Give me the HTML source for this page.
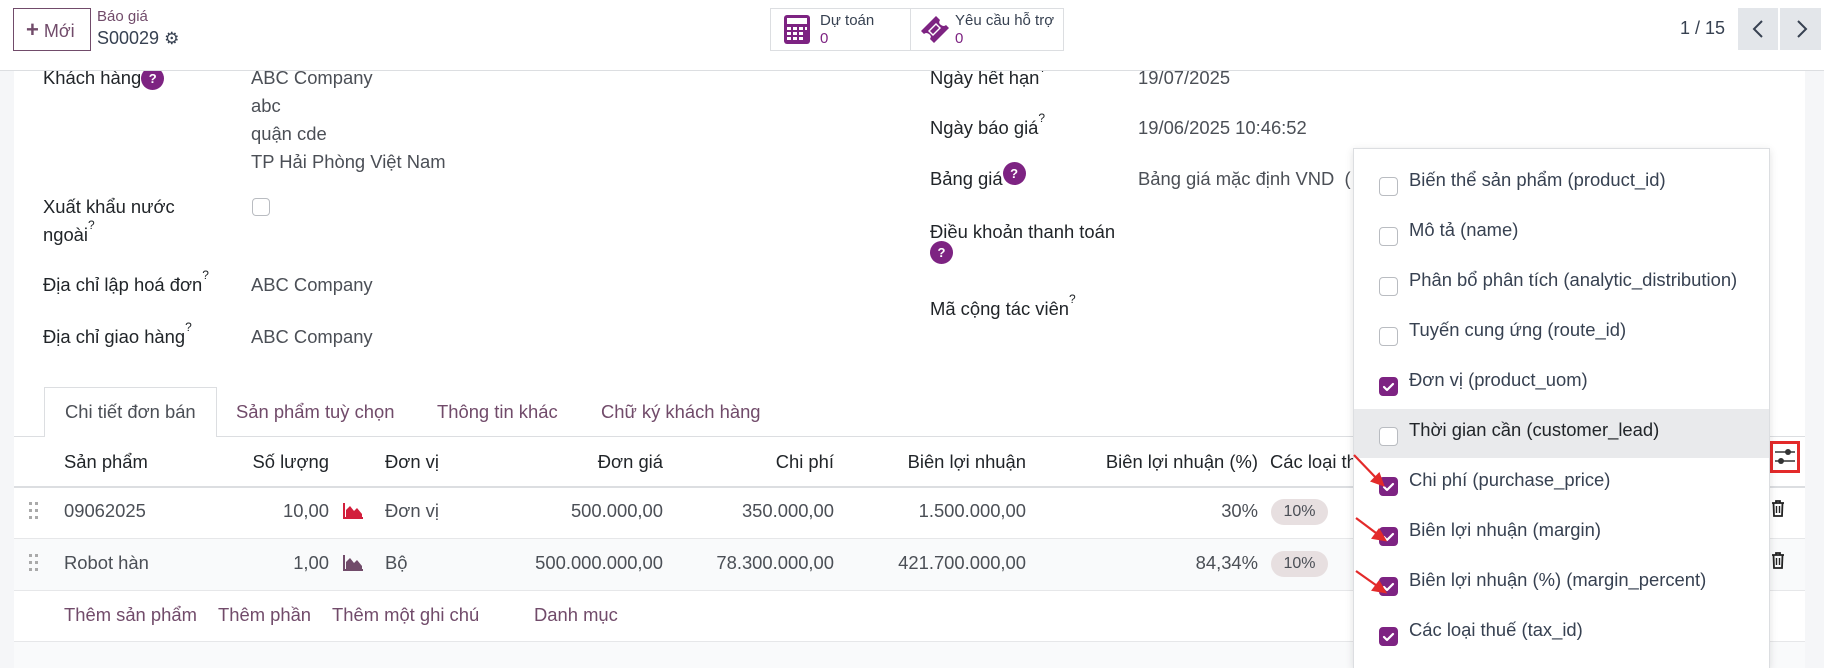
<!DOCTYPE html>
<html style="width:1824px;height:668px;overflow:hidden"><head><meta charset="utf-8">
<style>
*{box-sizing:border-box;margin:0;padding:0}
body{width:1824px;height:668px;overflow:hidden;position:relative;background:#f5f6f8;font-family:"Liberation Sans",Arial,sans-serif;color:#4b4f56;font-size:18.4px}
.a{position:absolute;white-space:nowrap}
.sheet{position:absolute;left:14px;top:71px;width:1791px;height:597px;background:#fff}
.top{position:absolute;left:0;top:0;width:1824px;height:71px;background:#fff;border-bottom:1px solid #dcdee1;z-index:5}
.lbl{color:#212529}
.q{display:inline-block;width:23px;height:23px;border-radius:50%;background:#7d2382;color:#fff;font-size:13px;text-align:center;line-height:23px;font-weight:bold;vertical-align:top}
.sup{font-size:12px;vertical-align:top;position:relative;top:-6px}
.pur{color:#714b6a}
.cb{position:absolute;width:19px;height:19px;border:1px solid #b9bcc1;border-radius:4px;background:#fff}
.cb.on{background:#7d2382;border-color:#7d2382}
.r{text-align:right}
.badge{position:absolute;width:57px;height:26px;border-radius:13px;background:#e7dfe0;color:#4b4f56;font-size:16px;text-align:center;line-height:26px}
</style></head><body>
<div class="sheet"></div>
<div class="a" style="left:1805px;top:71px;width:19px;height:597px;background:#f5f6f8"></div>

<div class="top">
  <div class="a" style="left:13px;top:8px;width:78px;height:43px;border:1px solid #714b6a;color:#714b6a;font-size:18px;line-height:41px;padding-left:12px"><b style="font-size:22px">+</b> Mới</div>
  <div class="a pur" style="left:97px;top:8px;font-size:15px">Báo giá</div>
  <div class="a" style="left:97px;top:28px;font-size:18px;color:#374151">S00029 <span style="font-size:17px">⚙</span></div>
  <div class="a" style="left:770px;top:8px;width:294px;height:43px;border:1px solid #dcdee1;background:#fff"></div>
  <div class="a" style="left:910px;top:8px;width:1px;height:43px;background:#dcdee1"></div>
  <svg class="a" style="left:784px;top:15px" width="26" height="29" viewBox="0 0 26 29"><rect x="0" y="0" width="26" height="29" rx="3" fill="#7d2382"/><rect x="3" y="3" width="20" height="6" fill="#fff"/><g fill="#fff"><rect x="3" y="12" width="4" height="3"/><rect x="9" y="12" width="4" height="3"/><rect x="15" y="12" width="4" height="3"/><rect x="21" y="12" width="2" height="3"/><rect x="3" y="17" width="4" height="3"/><rect x="9" y="17" width="4" height="3"/><rect x="15" y="17" width="4" height="3"/><rect x="3" y="22" width="4" height="3"/><rect x="9" y="22" width="4" height="3"/><rect x="15" y="22" width="4" height="3"/></g></svg>
  <div class="a" style="left:820px;top:12px;font-size:15px;color:#374151">Dự toán</div>
  <div class="a pur" style="left:820px;top:30px;font-size:15px;color:#7d2382">0</div>
  <svg class="a" style="left:919px;top:14px" width="32" height="30" viewBox="0 0 32 30"><path d="M2 17 L17 2 L21 6 Q19 9 22 11 Q25 13 27 11 L30 14 L15 29 L11 25 Q13 22 10 20 Q7 18 5 20 Z" fill="#7d2382"/><path d="M9 17 L17 9 L22 14 L14 22 Z" fill="#fff"/><path d="M11 17 L17 11 L20 14 L14 20 Z" fill="#7d2382"/></svg>
  <div class="a" style="left:955px;top:12px;font-size:15px;color:#374151">Yêu cầu hỗ trợ</div>
  <div class="a" style="left:955px;top:30px;font-size:15px;color:#7d2382">0</div>
  <div class="a" style="left:1680px;top:18px;font-size:18px;color:#374151">1 / 15</div>
  <div class="a" style="left:1738px;top:8px;width:40px;height:42px;background:#e3e6ea"></div>
  <div class="a" style="left:1780px;top:8px;width:41px;height:42px;background:#e3e6ea"></div>
  <svg class="a" style="left:1751px;top:19px" width="14" height="20"><path d="M11 2 L3 10 L11 18" stroke="#374151" stroke-width="2" fill="none"/></svg>
  <svg class="a" style="left:1795px;top:19px" width="14" height="20"><path d="M3 2 L11 10 L3 18" stroke="#374151" stroke-width="2" fill="none"/></svg>
</div>

<div class="a lbl" style="left:43px;top:67px">Khách hàng<span class="q">?</span></div>
<div class="a" style="left:251px;top:67px">ABC Company</div>
<div class="a" style="left:251px;top:95px">abc</div>
<div class="a" style="left:251px;top:123px">quận cde</div>
<div class="a" style="left:251px;top:151px">TP Hải Phòng Việt Nam</div>
<div class="a lbl" style="left:43px;top:196px">Xuất khẩu nước</div>
<div class="a lbl" style="left:43px;top:224px">ngoài<span class="sup">?</span></div>
<div class="cb" style="left:252px;top:198px;width:18px;height:18px"></div>
<div class="a lbl" style="left:43px;top:274px">Địa chỉ lập hoá đơn<span class="sup">?</span></div>
<div class="a" style="left:251px;top:274px">ABC Company</div>
<div class="a lbl" style="left:43px;top:326px">Địa chỉ giao hàng<span class="sup">?</span></div>
<div class="a" style="left:251px;top:326px">ABC Company</div>

<div class="a lbl" style="left:930px;top:67px">Ngày hết hạn<span class="sup">?</span></div>
<div class="a" style="left:1138px;top:67px">19/07/2025</div>
<div class="a lbl" style="left:930px;top:117px">Ngày báo giá<span class="sup">?</span></div>
<div class="a" style="left:1138px;top:117px">19/06/2025 10:46:52</div>
<div class="a lbl" style="left:930px;top:168px">Bảng giá<span class="q" style="margin-top:-6px">?</span></div>
<div class="a" style="left:1138px;top:168px">Bảng giá mặc định VND &nbsp;(</div>
<div class="a lbl" style="left:930px;top:221px">Điều khoản thanh toán</div>
<div class="a q" style="left:930px;top:241px">?</div>
<div class="a lbl" style="left:930px;top:298px">Mã cộng tác viên<span class="sup">?</span></div>

<div class="a" style="left:14px;top:436px;width:1791px;height:1px;background:#dcdee1"></div>
<div class="a" style="left:44px;top:387px;width:173px;height:50px;border:1px solid #dcdee1;border-bottom:none;background:#fff"></div>
<div class="a" style="left:65px;top:401px;color:#4b4f56">Chi tiết đơn bán</div>
<div class="a pur" style="left:236px;top:401px">Sản phẩm tuỳ chọn</div>
<div class="a pur" style="left:437px;top:401px">Thông tin khác</div>
<div class="a pur" style="left:601px;top:401px">Chữ ký khách hàng</div>

<div class="a" style="left:14px;top:486px;width:1791px;height:2px;background:#dcdee1"></div>
<div class="a" style="left:14px;top:538px;width:1791px;height:1px;background:#e6e7e9"></div>
<div class="a" style="left:14px;top:539px;width:1791px;height:51px;background:#f9fafb"></div>
<div class="a" style="left:14px;top:590px;width:1791px;height:1px;background:#e6e7e9"></div>
<div class="a" style="left:14px;top:641px;width:1791px;height:1px;background:#e6e7e9"></div>
<div class="a" style="left:14px;top:642px;width:1791px;height:26px;background:#f9fafb"></div>

<div class="a lbl" style="left:64px;top:451px">Sản phẩm</div>
<div class="a lbl r" style="left:229px;top:451px;width:100px">Số lượng</div>
<div class="a lbl" style="left:385px;top:451px">Đơn vị</div>
<div class="a lbl r" style="left:513px;top:451px;width:150px">Đơn giá</div>
<div class="a lbl r" style="left:684px;top:451px;width:150px">Chi phí</div>
<div class="a lbl r" style="left:826px;top:451px;width:200px">Biên lợi nhuận</div>
<div class="a lbl r" style="left:1058px;top:451px;width:200px">Biên lợi nhuận (%)</div>
<div class="a lbl" style="left:1270px;top:451px">Các loại th</div>

<svg class="a" style="left:29px;top:502px" width="10" height="18"><g fill="#aaa"><rect x="0" y="0" width="3" height="3"/><rect x="6" y="0" width="3" height="3"/><rect x="0" y="7" width="3" height="3"/><rect x="6" y="7" width="3" height="3"/><rect x="0" y="14" width="3" height="3"/><rect x="6" y="14" width="3" height="3"/></g></svg>
<div class="a" style="left:64px;top:500px">09062025</div>
<div class="a r" style="left:229px;top:500px;width:100px">10,00</div>
<svg class="a" style="left:342px;top:503px" width="22" height="17"><path d="M2 0 V15 H21" stroke="#d21f3c" stroke-width="2" fill="none"/><path d="M4 14 L4 7 L8 3 L12 8 L15 5 L20 11 L20 14 Z" fill="#d21f3c"/></svg>
<div class="a" style="left:385px;top:500px">Đơn vị</div>
<div class="a r" style="left:513px;top:500px;width:150px">500.000,00</div>
<div class="a r" style="left:684px;top:500px;width:150px">350.000,00</div>
<div class="a r" style="left:826px;top:500px;width:200px">1.500.000,00</div>
<div class="a r" style="left:1058px;top:500px;width:200px">30%</div>
<div class="badge" style="left:1271px;top:499px">10%</div>

<svg class="a" style="left:29px;top:554px" width="10" height="18"><g fill="#aaa"><rect x="0" y="0" width="3" height="3"/><rect x="6" y="0" width="3" height="3"/><rect x="0" y="7" width="3" height="3"/><rect x="6" y="7" width="3" height="3"/><rect x="0" y="14" width="3" height="3"/><rect x="6" y="14" width="3" height="3"/></g></svg>
<div class="a" style="left:64px;top:552px">Robot hàn</div>
<div class="a r" style="left:229px;top:552px;width:100px">1,00</div>
<svg class="a" style="left:342px;top:555px" width="22" height="17"><path d="M2 0 V15 H21" stroke="#714b6a" stroke-width="2" fill="none"/><path d="M4 14 L4 7 L8 3 L12 8 L15 5 L20 11 L20 14 Z" fill="#714b6a"/></svg>
<div class="a" style="left:385px;top:552px">Bộ</div>
<div class="a r" style="left:483px;top:552px;width:180px">500.000.000,00</div>
<div class="a r" style="left:654px;top:552px;width:180px">78.300.000,00</div>
<div class="a r" style="left:826px;top:552px;width:200px">421.700.000,00</div>
<div class="a r" style="left:1058px;top:552px;width:200px">84,34%</div>
<div class="badge" style="left:1271px;top:551px">10%</div>

<div class="a pur" style="left:64px;top:604px">Thêm sản phẩm</div>
<div class="a pur" style="left:218px;top:604px">Thêm phần</div>
<div class="a pur" style="left:332px;top:604px">Thêm một ghi chú</div>
<div class="a pur" style="left:534px;top:604px">Danh mục</div>

<svg class="a" style="left:1771px;top:500px" width="14" height="17"><path d="M1 3 H13 M5 3 V1 H9 V3 M2.5 3 L3 16 H11 L11.5 3" stroke="#222" stroke-width="1.8" fill="none"/><path d="M5.5 6 V13 M8.5 6 V13" stroke="#222" stroke-width="1.4"/></svg>
<svg class="a" style="left:1771px;top:552px" width="14" height="17"><path d="M1 3 H13 M5 3 V1 H9 V3 M2.5 3 L3 16 H11 L11.5 3" stroke="#222" stroke-width="1.8" fill="none"/><path d="M5.5 6 V13 M8.5 6 V13" stroke="#222" stroke-width="1.4"/></svg>

<div class="a" style="left:1770px;top:441px;width:30px;height:32px;border:3px solid #e32a2a"></div>
<svg class="a" style="left:1774px;top:447px" width="22" height="20"><path d="M1 5 H21 M1 14 H21" stroke="#333" stroke-width="1.6"/><circle cx="14" cy="5" r="3" fill="#333"/><circle cx="7" cy="14" r="3" fill="#333"/></svg>

<div class="a" style="left:1353px;top:148px;width:417px;height:520px;background:#fff;border:1px solid #dcdee1;border-bottom:none;box-shadow:0 2px 8px rgba(0,0,0,.12);z-index:3">
  <div class="a" style="left:0;top:260px;width:415px;height:49px;background:#e9eaec"></div>
</div>
<div style="position:absolute;left:0;top:0;z-index:4">
<div class="cb" style="left:1379px;top:177px"></div><div class="a" style="left:1409px;top:169px;color:#374151">Biến thể sản phẩm (product_id)</div>
<div class="cb" style="left:1379px;top:227px"></div><div class="a" style="left:1409px;top:219px;color:#374151">Mô tả (name)</div>
<div class="cb" style="left:1379px;top:277px"></div><div class="a" style="left:1409px;top:269px;color:#374151">Phân bổ phân tích (analytic_distribution)</div>
<div class="cb" style="left:1379px;top:327px"></div><div class="a" style="left:1409px;top:319px;color:#374151">Tuyến cung ứng (route_id)</div>
<div class="cb on" style="left:1379px;top:377px"></div><div class="a" style="left:1409px;top:369px;color:#374151">Đơn vị (product_uom)</div>
<div class="cb" style="left:1379px;top:427px"></div><div class="a" style="left:1409px;top:419px;color:#212529">Thời gian cần (customer_lead)</div>
<div class="cb on" style="left:1379px;top:477px"></div><div class="a" style="left:1409px;top:469px;color:#374151">Chi phí (purchase_price)</div>
<div class="cb on" style="left:1379px;top:527px"></div><div class="a" style="left:1409px;top:519px;color:#374151">Biên lợi nhuận (margin)</div>
<div class="cb on" style="left:1379px;top:577px"></div><div class="a" style="left:1409px;top:569px;color:#374151">Biên lợi nhuận (%) (margin_percent)</div>
<div class="cb on" style="left:1379px;top:627px"></div><div class="a" style="left:1409px;top:619px;color:#374151">Các loại thuế (tax_id)</div>
<svg class="a" style="left:1379px;top:377px" width="19" height="270"><g stroke="#fff" stroke-width="2.2" fill="none" stroke-linecap="round" stroke-linejoin="round"><path d="M5 10 L8 13 L14 7"/><path d="M5 110 L8 113 L14 107"/><path d="M5 160 L8 163 L14 157"/><path d="M5 210 L8 213 L14 207"/><path d="M5 260 L8 263 L14 257"/></g></svg>
<svg class="a" style="left:1350px;top:450px" width="45" height="150"><g stroke="#e32a2a" stroke-width="2.2" fill="#e32a2a"><path d="M4 5 L28 30"/><path d="M33 35 L22 31 L29 24 Z"/><path d="M6 68 L30 86"/><path d="M35 90 L23 88 L29 80 Z"/><path d="M6 121 L30 138"/><path d="M35 142 L23 140 L29 132 Z"/></g></svg>
</div>
</body></html>
